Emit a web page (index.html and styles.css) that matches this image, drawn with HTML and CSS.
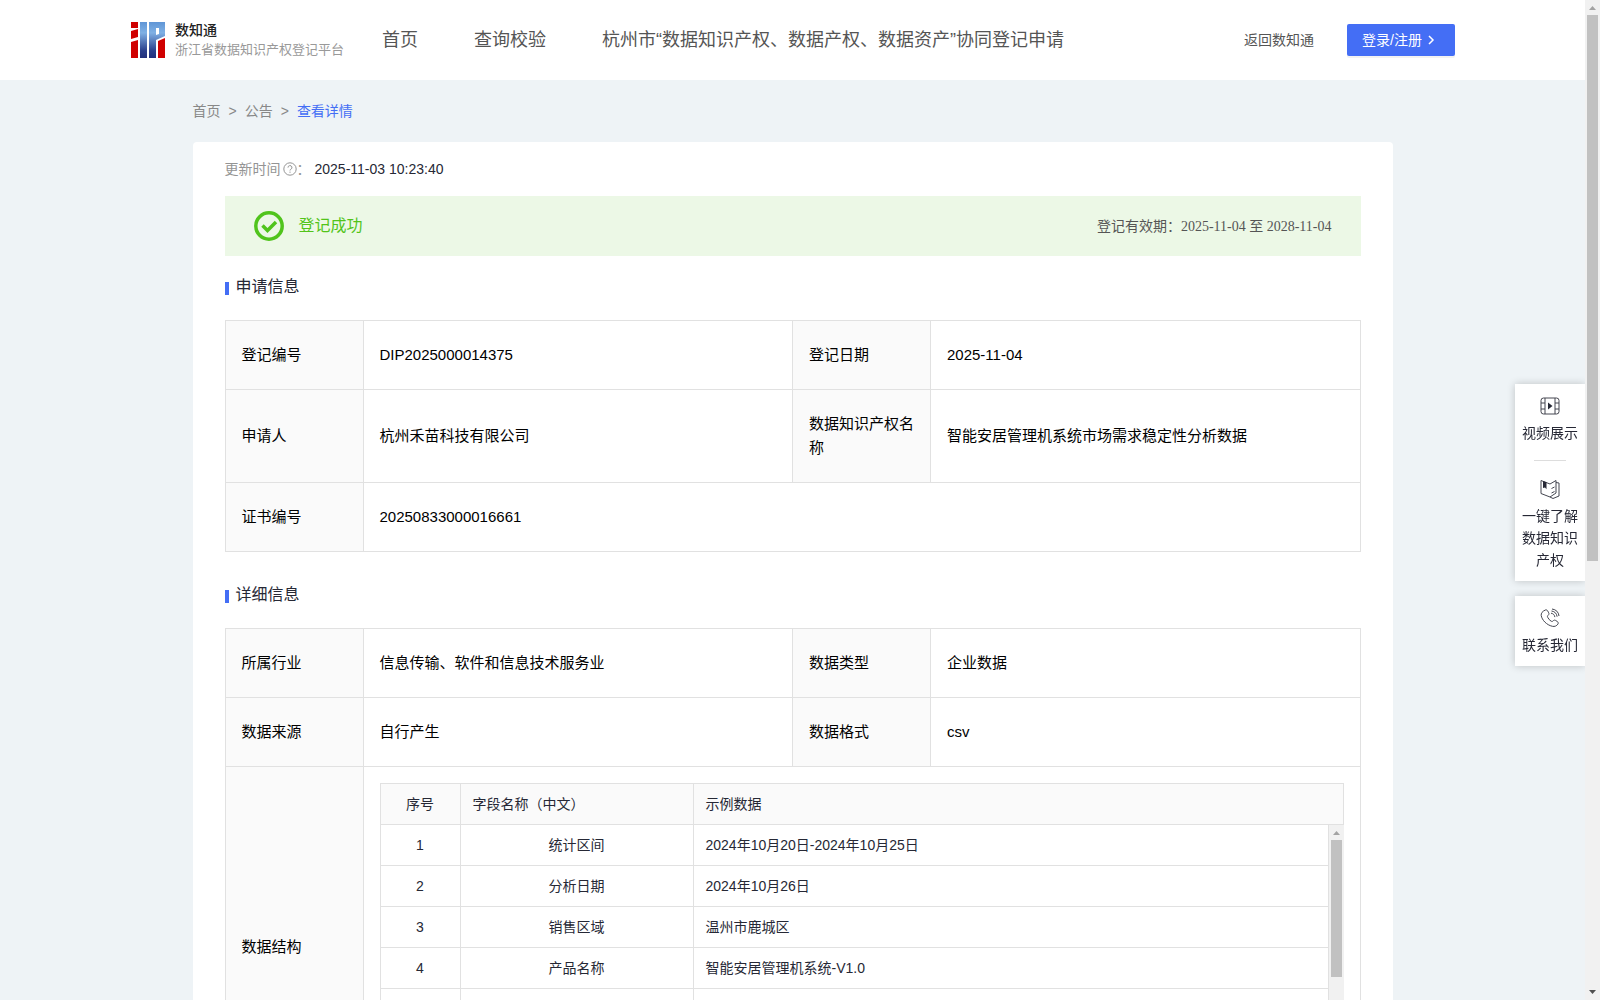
FILE: index.html
```html
<!DOCTYPE html>
<html lang="zh-CN">
<head>
<meta charset="utf-8">
<meta name="viewport" content="width=device-width, initial-scale=1">
<title>数知通 - 查看详情</title>
<link rel="stylesheet" href="styles.css">
</head>
<body>
<div class="shell">
  <div class="page">
    <header class="header">
      <a class="brand" href="#">
        <svg class="brand-logo" viewBox="0 0 34 36" aria-hidden="true">
          <defs>
            <linearGradient id="blue" gradientUnits="userSpaceOnUse" x1="0" y1="0" x2="0" y2="36">
              <stop offset="0" stop-color="#5f95d6"/>
              <stop offset=".3" stop-color="#7fb0e4"/>
              <stop offset=".8" stop-color="#2a3f8c"/>
              <stop offset="1" stop-color="#22307c"/>
            </linearGradient>
          </defs>
          <path fill="#d00000" d="M0 0h7v6H0zM0 9l7-2v8l-7 2zM0 20l7-2v18H0z"/>
          <path fill="url(#blue)" d="M9 0h7v36H9z"/>
          <path fill="url(#blue)" fill-rule="evenodd" d="M18 0h16v14l-9 4v18h-7zM25 6v7l3-1V6z"/>
          <path fill="#d00000" d="M27 19l7-3v20h-7z"/>
        </svg>
        <span class="brand-text">
          <strong class="brand-name">数知通</strong>
          <span class="brand-sub">浙江省数据知识产权登记平台</span>
        </span>
      </a>
      <nav class="nav">
        <a href="#">首页</a>
        <a href="#">查询校验</a>
        <a href="#">杭州市“数据知识产权、数据产权、数据资产”协同登记申请</a>
      </nav>
      <a class="back" href="#">返回数知通</a>
      <button class="login" type="button">登录/注册
        <svg class="login-arrow" viewBox="0 0 8 10" aria-hidden="true"><path d="M2 1l4 4-4 4"/></svg>
      </button>
    </header>

    <main class="main">
      <nav class="crumbs">
        <a href="#">首页</a><span>&gt;</span><a href="#">公告</a><span>&gt;</span><a class="current" href="#">查看详情</a>
      </nav>

      <section class="card">
        <p class="updated">
          <span class="updated-label">更新时间<svg class="help" viewBox="0 0 14 14" aria-hidden="true"><circle cx="7" cy="7" r="6.2"/><path d="M5 5.6a2 1.9 0 1 1 2.9 1.6c-.6.4-.9.6-.9 1.3M7 9.6v1.2"/></svg>：</span>
          <time>2025-11-03 10:23:40</time>
        </p>

        <div class="status">
          <svg class="status-icon" viewBox="0 0 30 30" aria-hidden="true"><circle cx="15" cy="15" r="13.2"/><path d="M8.500 14.500l5 5 8.500-8.500"/></svg>
          <span class="status-text">登记成功</span>
          <span class="status-period"><span>登记有效期：</span><span class="status-dates">2025-11-04 至 2028-11-04</span></span>
        </div>

        <h2 class="title">申请信息</h2>
        <table class="info">
          <colgroup><col class="col-label"><col><col class="col-label"><col></colgroup>
          <tbody>
            <tr><th scope="row">登记编号</th><td>DIP2025000014375</td><th scope="row">登记日期</th><td>2025-11-04</td></tr>
            <tr><th scope="row">申请人</th><td>杭州禾苗科技有限公司</td><th scope="row">数据知识产权名称</th><td>智能安居管理机系统市场需求稳定性分析数据</td></tr>
            <tr><th scope="row">证书编号</th><td colspan="3">20250833000016661</td></tr>
          </tbody>
        </table>

        <h2 class="title title-next">详细信息</h2>
        <table class="info">
          <colgroup><col class="col-label"><col><col class="col-label"><col></colgroup>
          <tbody>
            <tr><th scope="row">所属行业</th><td>信息传输、软件和信息技术服务业</td><th scope="row">数据类型</th><td>企业数据</td></tr>
            <tr><th scope="row">数据来源</th><td>自行产生</td><th scope="row">数据格式</th><td>csv</td></tr>
            <tr>
              <th scope="row">数据结构</th>
              <td class="nested" colspan="3">
                <table class="fields fields-head">
                  <colgroup><col class="col-no"><col class="col-name"><col></colgroup>
                  <thead><tr><th class="center" scope="col">序号</th><th scope="col">字段名称（中文）</th><th scope="col">示例数据</th></tr></thead>
                </table>
                <div class="fields-scroll">
                  <table class="fields">
                    <colgroup><col class="col-no"><col class="col-name"><col></colgroup>
                    <tbody>
                      <tr><td class="center">1</td><td class="center">统计区间</td><td>2024年10月20日-2024年10月25日</td></tr>
                      <tr><td class="center">2</td><td class="center">分析日期</td><td>2024年10月26日</td></tr>
                      <tr><td class="center">3</td><td class="center">销售区域</td><td>温州市鹿城区</td></tr>
                      <tr><td class="center">4</td><td class="center">产品名称</td><td>智能安居管理机系统-V1.0</td></tr>
                      <tr><td></td><td></td><td></td></tr>
                      <tr><td></td><td></td><td></td></tr>
                      <tr><td></td><td></td><td></td></tr>
                    </tbody>
                  </table>
                  <div class="bar" aria-hidden="true">
                    <svg class="bar-arrow" viewBox="0 0 15 15"><path fill="#a3a3a3" d="M4 10l3.500-4 3.500 4z"/></svg>
                    <span class="bar-thumb bar-thumb-fields"></span>
                  </div>
                </div>
              </td>
            </tr>
          </tbody>
        </table>
      </section>
    </main>
  </div>

  <aside class="tools">
    <div class="tools-box">
      <a class="tool" href="#">
        <svg viewBox="0 0 20 20" aria-hidden="true"><rect x="1" y="2" width="18" height="16" rx="2.500"/><path d="M5 2v16M15 2v16M1 7h4M1 13h4M15 7h4M15 13h4"/><path class="solid" d="M8 6.500v7l4.500-3.500z"/></svg>
        视频展示
      </a>
      <hr class="tools-line">
      <a class="tool" href="#">
        <svg viewBox="0 0 20 20" aria-hidden="true"><path d="M1 1.500l9 3.500 6-3.500v12.500l-6 4-9-3.500zM16 3.500l3 .5v13l-6 2.500-3-1.500M11.500 9.500l3-1.500M11.500 14l3-1.500"/><path class="solid" d="M3 2l3.500 1.300v7L5 8.500 3 9z"/></svg>
        一键了解数据知识产权
      </a>
    </div>
    <div class="tools-box">
      <a class="tool" href="#">
        <svg viewBox="0 0 20 20" aria-hidden="true"><path d="M5 2.200c1-.7 2-.3 2.600.6l1.100 2c.5 1 .2 1.800-.6 2.500-.8.600-.8 1.300-.3 2.200.8 1.500 1.800 2.700 3.200 3.600.8.500 1.500.5 2.100-.2.700-.8 1.500-1 2.400-.5l1.900 1.200c.9.600 1.100 1.600.5 2.500-1.300 1.900-3.200 2.700-5.500 2.200C6.500 17 2 12 1.200 7.500.9 5.200 2.500 3.300 5 2.200zM11 5.200c2.200.300 3.500 1.600 3.900 3.900M11.500 3c3.200.400 5.200 2.400 5.600 5.700M12 1c4 .500 6.600 3 7 7"/></svg>
        联系我们
      </a>
    </div>
  </aside>

  <div class="bar bar-page" aria-hidden="true">
    <svg class="bar-arrow" viewBox="0 0 15 15"><path fill="#a3a3a3" d="M4 10l3.500-4 3.500 4z"/></svg>
    <span class="bar-thumb bar-thumb-page"></span>
    <svg class="bar-arrow bar-arrow-end" viewBox="0 0 15 15"><path fill="#505050" d="M4 5l3.500 4 3.500-4z"/></svg>
  </div>
</div>
</body>
</html>
```

FILE: styles.css
```css
* {
  box-sizing: border-box;
}

body {
  margin: 0;
  background: #eef3f6;
  color: #262835;
  font: 14px/22px "Liberation Sans", "Noto Sans CJK SC", sans-serif;
}

a {
  color: inherit;
  text-decoration: none;
}

.shell {
  display: flex;
  height: 100vh;
  overflow: hidden;
}

.page {
  flex: 1;
  min-width: 0;
}

/* Header */
.header {
  display: flex;
  align-items: center;
  height: 80px;
  padding: 0 130px 0 131px;
  background: #fff;
  color: #555;
  white-space: nowrap;
}

.brand {
  display: flex;
  align-items: center;
  gap: 10px;
}

.brand-logo {
  width: 34px;
  height: 36px;
}

.brand-text {
  display: flex;
  flex-direction: column;
  line-height: 20px;
}

.brand-name {
  color: #222;
  font-size: 14px;
  font-weight: 500;
}

.brand-sub {
  color: #999;
  font-size: 13px;
}

.nav {
  display: flex;
  gap: 56px;
  margin-left: 38px;
  font-size: 18px;
  line-height: 26px;
}

.back {
  margin-left: auto;
}

.login {
  display: flex;
  align-items: center;
  gap: 5px;
  width: 108px;
  height: 32px;
  margin-left: 33px;
  padding: 0 15px;
  border: 0;
  border-radius: 2px;
  background: #446ef5;
  box-shadow: 0 2px 0 rgba(0, 0, 0, 0.05);
  color: #fff;
  font: inherit;
  white-space: nowrap;
}

.login-arrow {
  width: 8px;
  height: 10px;
  fill: none;
  stroke: #fff;
  stroke-width: 1.5;
}

/* Content column */
.main {
  max-width: 1200px;
  margin: 0 auto;
}

.crumbs {
  display: flex;
  gap: 8px;
  padding: 20px 0;
  color: #888;
}

.crumbs .current {
  color: #446ef5;
}

.card {
  padding: 16px 32px 32px;
  border-radius: 4px;
  background: #fff;
}

.updated {
  display: flex;
  gap: 4px;
  margin: 0;
}

.updated-label {
  display: flex;
  align-items: center;
  color: #949494;
}

.help {
  width: 14px;
  height: 14px;
  margin-left: 2px;
  fill: none;
  stroke: #949494;
}

.status {
  display: flex;
  align-items: center;
  height: 60px;
  margin-top: 16px;
  padding: 0 29px;
  background: #ecf8e6;
}

.status-icon {
  width: 30px;
  height: 30px;
  fill: none;
  stroke: #50c41c;
  stroke-width: 3.5;
}

.status-text {
  margin-left: 15px;
  color: #52c41a;
  font-size: 16px;
}

.status-period {
  margin-left: auto;
  color: #555;
}

.status-dates {
  font-family: "Liberation Serif", "Noto Sans CJK SC", serif;
}

.title {
  display: flex;
  align-items: flex-end;
  gap: 7px;
  margin: 19px 0 21px;
  font-size: 16px;
  font-weight: 400;
  line-height: 24px;
}

.title::before {
  width: 4px;
  height: 13px;
  margin-bottom: 4px;
  background: #446ef5;
  content: "";
}

.title-next {
  margin-top: 31px;
}

/* Label and value tables */
.info,
.fields {
  width: 100%;
  border-collapse: collapse;
  table-layout: fixed;
}

.col-label {
  width: 138px;
}

.info th,
.info td {
  padding: 22px 16px;
  border: 1px solid #e1e1e1;
  color: #000;
  font-size: 15px;
  font-weight: 400;
  line-height: 24px;
  text-align: left;
}

.info th {
  background: #fafafa;
}

.info .nested {
  padding: 16px;
}

/* Field list */
.col-no {
  width: 80px;
}

.col-name {
  width: 233px;
}

.info .fields th,
.info .fields td {
  height: 41px;
  padding: 9px 12px;
  color: #262835;
  font-size: 14px;
  line-height: 22px;
}

.info .fields .center {
  text-align: center;
}

.fields-scroll {
  display: flex;
  height: 286px;
  overflow: hidden;
}

.fields-scroll .fields {
  flex: 1;
}

.info .fields-scroll tr:first-child td {
  height: 40px;
  border-top: 0;
}

/* Scroll bars */
.bar {
  display: flex;
  flex: none;
  flex-direction: column;
  align-items: center;
  width: 15px;
  background: #f1f1f1;
}

.bar-arrow {
  width: 15px;
  height: 15px;
}

.bar-arrow-end {
  margin-top: auto;
}

.bar-thumb {
  width: 11px;
  background: #c1c1c1;
}

.bar-thumb-fields {
  height: 48%;
}

.bar-thumb-page {
  height: 54.6%;
}

/* Floating shortcuts at the window edge */
.tools {
  position: fixed;
  top: 384px;
  right: 15px;
  display: flex;
  flex-direction: column;
  gap: 15px;
  width: 70px;
}

.tools-box {
  padding: 12px 6px 10px;
  background: #fff;
  box-shadow: 0 0 8px rgba(0, 0, 0, 0.2);
  clip-path: inset(-10px 0 -10px -10px);
}

.tool {
  display: flex;
  flex-direction: column;
  align-items: center;
  gap: 6px;
  text-align: center;
}

.tool svg {
  width: 20px;
  height: 20px;
  fill: none;
  stroke: #444650;
}

.tool .solid {
  fill: #262835;
  stroke: none;
}

.tools-line {
  width: 32px;
  height: 1px;
  margin: 16px auto 18px;
  border: 0;
  background: #ddd;
}
```
